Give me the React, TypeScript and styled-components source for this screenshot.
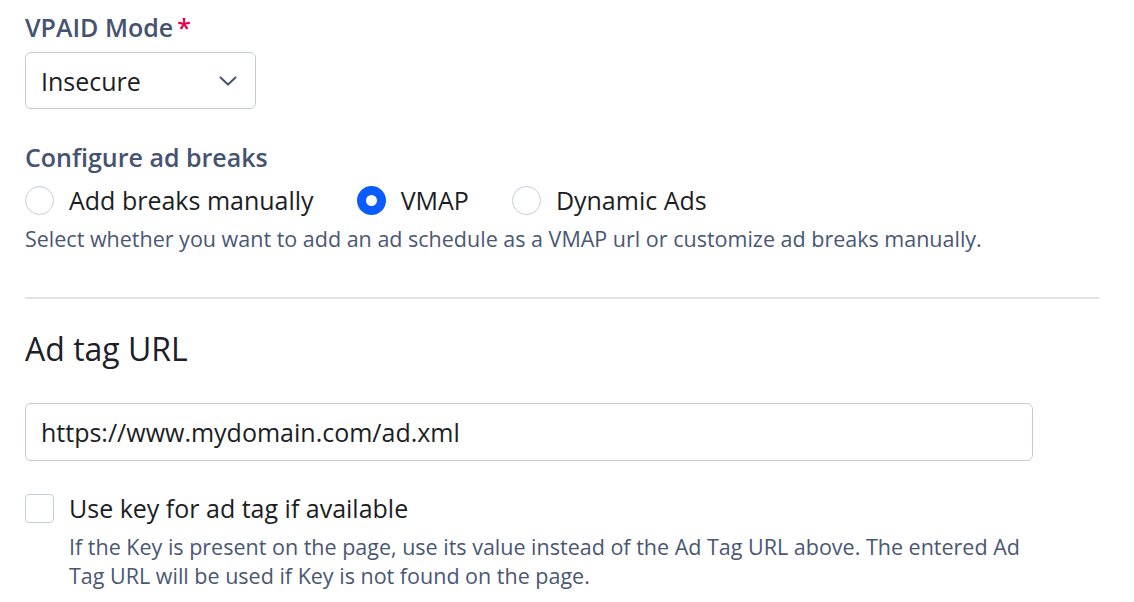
import React, { useState } from "react";
import styled, { createGlobalStyle } from "styled-components";

const GlobalStyle = createGlobalStyle`
  html, body { margin: 0; padding: 0; background: #ffffff; }
  body { font-family: "Open Sans", "Noto Sans", sans-serif; -webkit-font-smoothing: antialiased; }
  * { box-sizing: border-box; }
`;

const Page = styled.div`
  display: flex;
  flex-direction: column;
  width: 1099px;
  padding: 11px 0 0 25px;
`;

const FieldLabel = styled.div`
  font-size: 25px;
  line-height: 32px;
  font-weight: 600;
  color: #465370;
  display: flex;
  align-items: baseline;
`;

const Required = styled.span`
  color: #e4004f;
  margin-left: 4px;
`;

const SelectBox = styled.div`
  margin-top: 9px;
  width: 231px;
  height: 57px;
  border: 1px solid #c4cbd7;
  border-radius: 6px;
  display: flex;
  align-items: center;
  justify-content: space-between;
  padding: 0 18px 0 15px;
  font-size: 25px;
  color: #1b1e24;
`;

const SectionLabel = styled(FieldLabel)`
  margin-top: 32px;
`;

const RadioRow = styled.div`
  margin-top: 11px;
  display: flex;
  align-items: center;
  gap: 43px;
  height: 32px;
`;

const RadioOption = styled.label`
  display: flex;
  align-items: center;
  gap: 15px;
  font-size: 25px;
  color: #1b1e24;
  cursor: pointer;
`;

const RadioCircle = styled.span<{ $checked?: boolean }>`
  width: 29px;
  height: 29px;
  border-radius: 50%;
  flex: none;
  background: #ffffff;
  border: ${(p) => (p.$checked ? "9px solid #0a5cff" : "1px solid #c6cddb")};
`;

const HelpText = styled.div<{ $indent?: boolean }>`
  font-size: 21.5px;
  line-height: 29px;
  color: #4a5774;
  margin-top: 8px;
  padding-left: ${(p) => (p.$indent ? "44px" : "0")};
  max-width: ${(p) => (p.$indent ? "1020px" : "none")};
`;

const Divider = styled.hr`
  margin: 44px 0 0 0;
  border: none;
  height: 2px;
  background: #dfe3e8;
  width: 1074px;
`;

const Heading = styled.h2`
  margin: 28px 0 0 0;
  font-size: 32px;
  line-height: 44px;
  font-weight: 400;
  color: #1c2028;
`;

const TextInput = styled.input`
  margin-top: 32px;
  width: 1008px;
  height: 58px;
  border: 1px solid #c4cbd7;
  border-radius: 6px;
  padding: 0 15px;
  font-family: "Open Sans", "Noto Sans", sans-serif;
  font-size: 25px;
  color: #1b1e24;
  outline: none;
`;

const CheckRow = styled.label`
  margin-top: 31px;
  display: flex;
  align-items: center;
  gap: 15px;
  height: 32px;
  font-size: 25px;
  color: #1b1e24;
`;

const CheckBox = styled.span`
  width: 29px;
  height: 29px;
  border: 1px solid #c6cddb;
  border-radius: 4px;
  flex: none;
`;

export default function App() {
  const [mode] = useState("VMAP");
  const options = ["Add breaks manually", "VMAP", "Dynamic Ads"];
  return (
    <>
      <GlobalStyle />
      <Page>
        <FieldLabel>
          VPAID Mode<Required>*</Required>
        </FieldLabel>
        <SelectBox>
          <span>Insecure</span>
          <svg width="18" height="10" viewBox="0 0 18 10" fill="none">
            <path d="M1.5 1.5 9 8.5 16.5 1.5" stroke="#465370" strokeWidth="2" strokeLinecap="round" strokeLinejoin="round" />
          </svg>
        </SelectBox>
        <SectionLabel>Configure ad breaks</SectionLabel>
        <RadioRow>
          {options.map((o) => (
            <RadioOption key={o}>
              <RadioCircle $checked={o === mode} />
              {o}
            </RadioOption>
          ))}
        </RadioRow>
        <HelpText>
          Select whether you want to add an ad schedule as a VMAP url or customize ad breaks manually.
        </HelpText>
        <Divider />
        <Heading>Ad tag URL</Heading>
        <TextInput defaultValue="https://www.mydomain.com/ad.xml" />
        <CheckRow>
          <CheckBox />
          Use key for ad tag if available
        </CheckRow>
        <HelpText $indent>
          If the Key is present on the page, use its value instead of the Ad Tag URL above. The entered Ad Tag URL will be used if Key is not found on the page.
        </HelpText>
      </Page>
    </>
  );
}
